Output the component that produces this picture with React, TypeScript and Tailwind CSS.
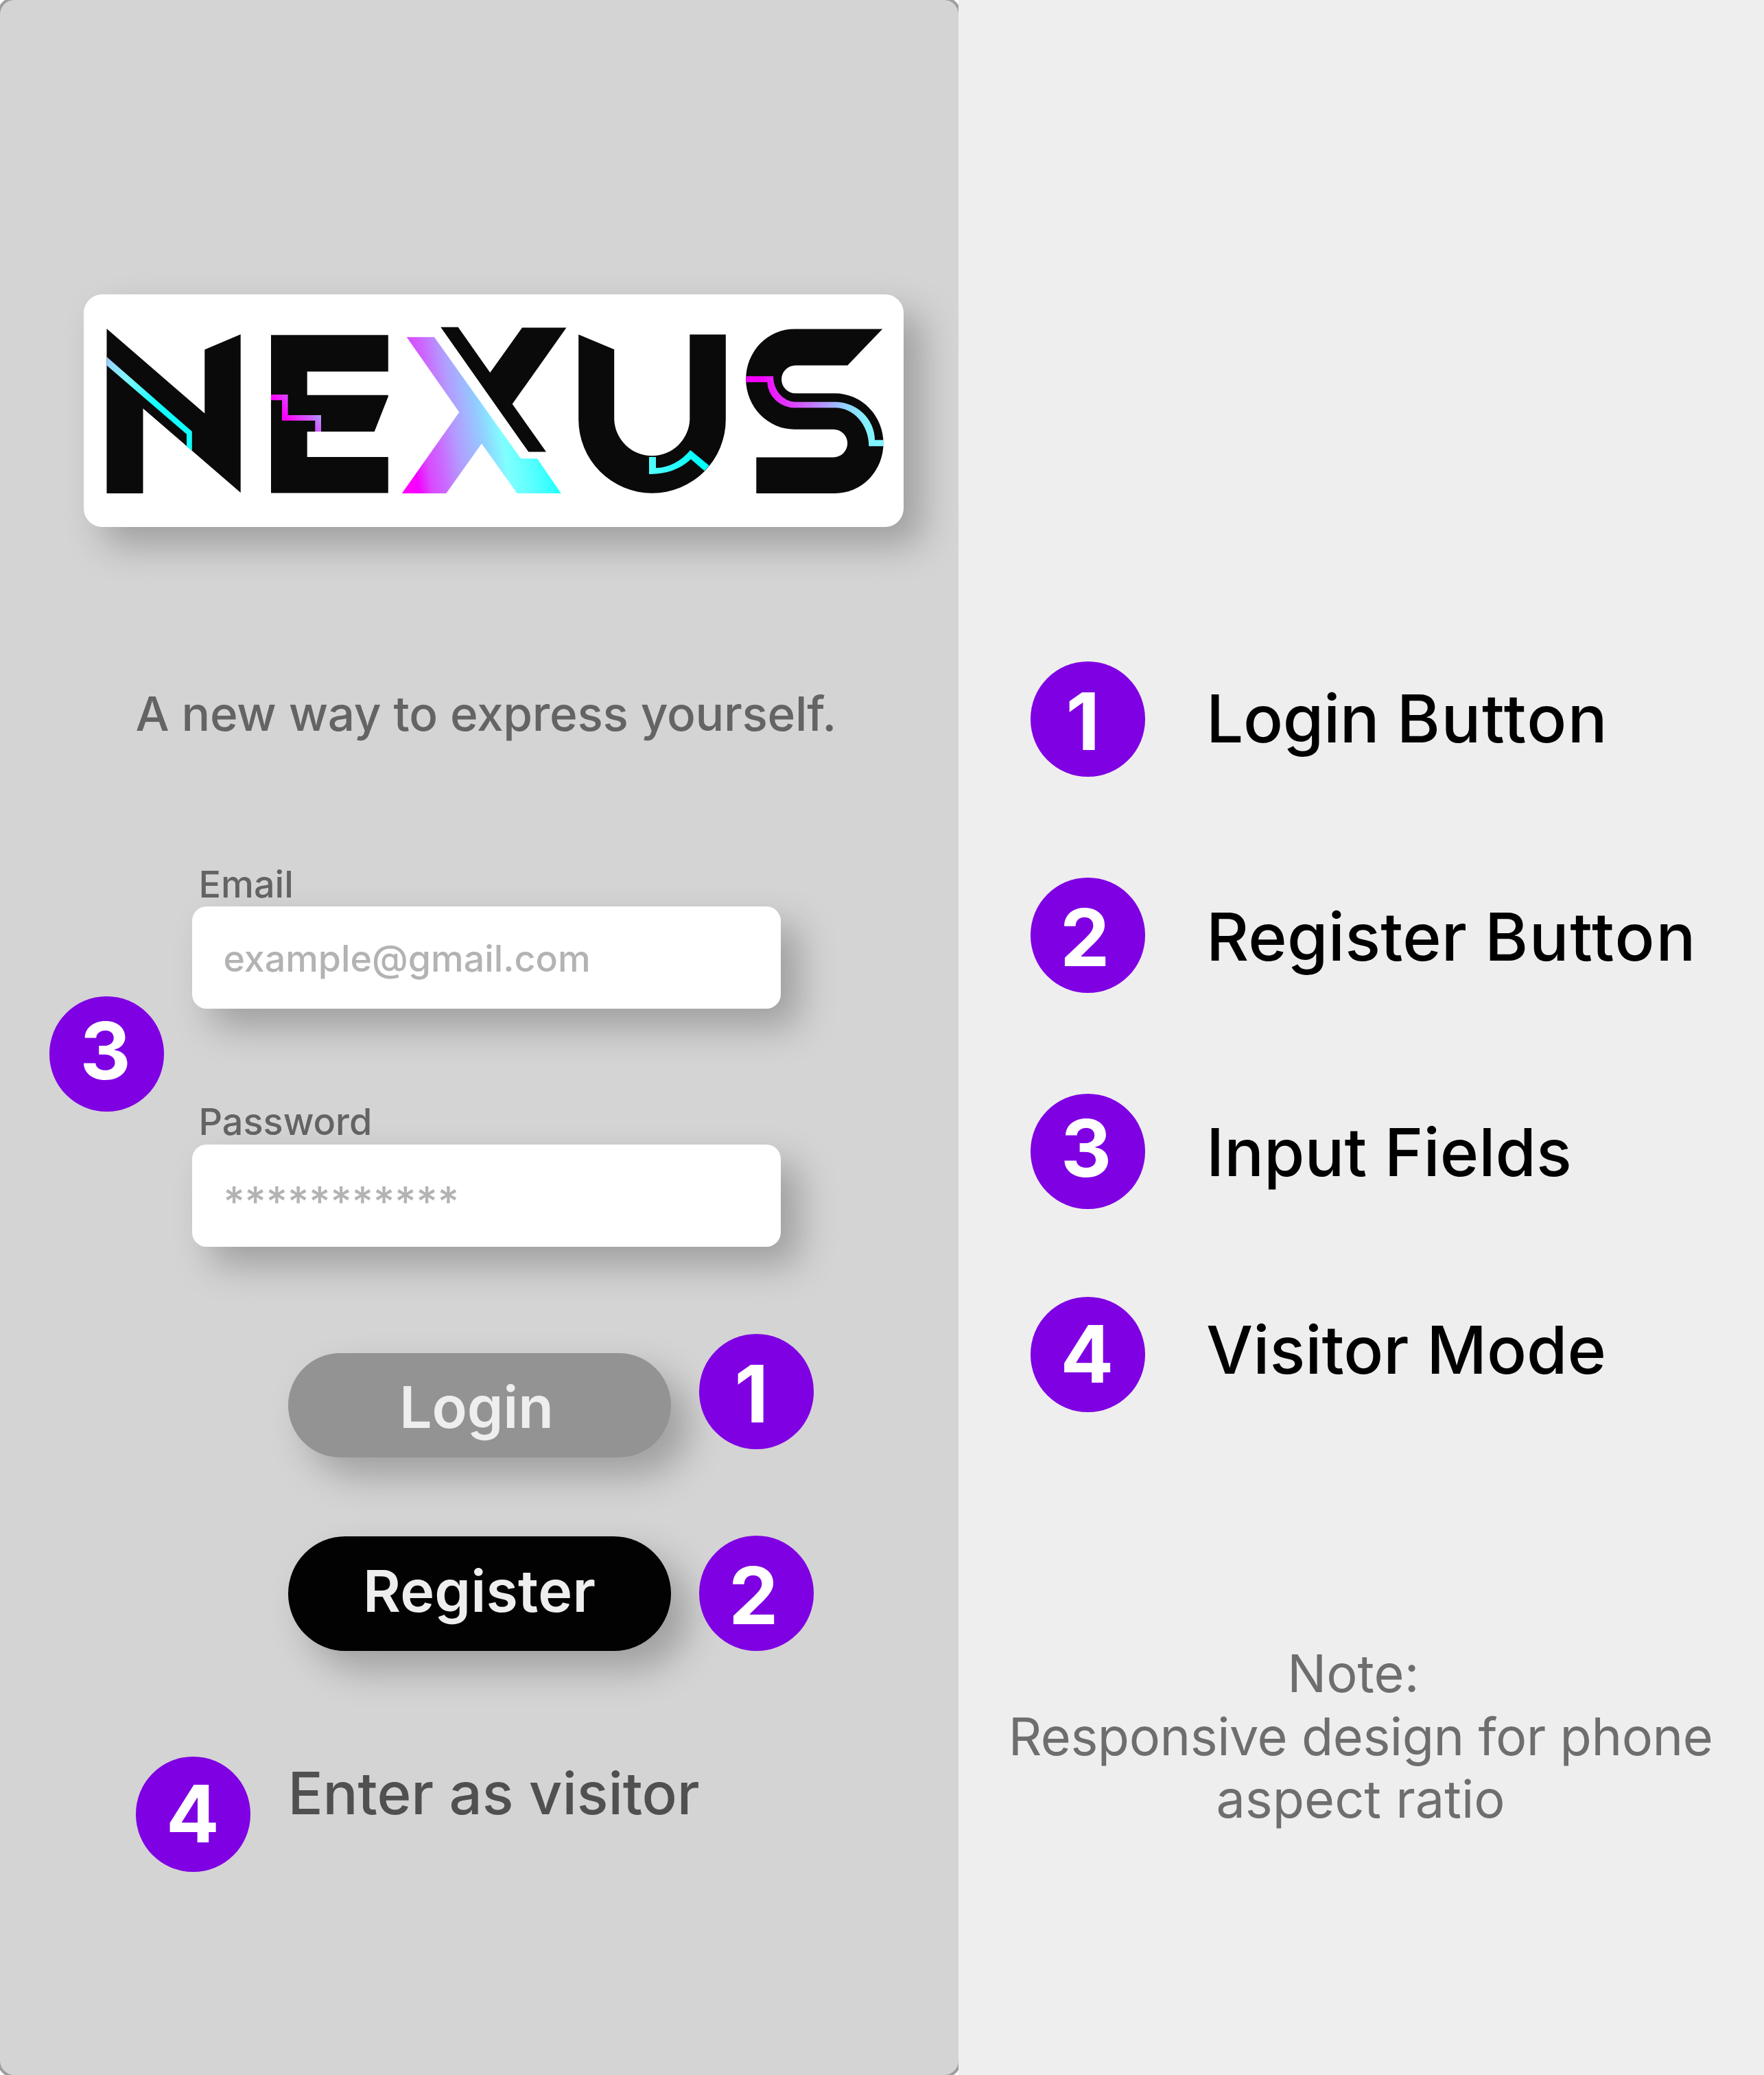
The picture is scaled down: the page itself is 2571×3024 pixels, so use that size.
import type { ReactNode } from 'react';

type Digit = 1 | 2 | 3 | 4;

const digitPlacement: Record<Digit, string> = {
  1: 'pl-[52px] pt-[30px]',
  2: 'pl-[43.5px] pt-[30px]',
  3: 'pl-[44.5px] pt-[22px]',
  4: 'pl-[44px] pt-[26px]',
};

function Badge({ n, className = '' }: { n: Digit; className?: string }) {
  return (
    <div
      className={`h-[168px] w-[167px] shrink-0 rounded-full bg-[#7f00e3] text-[115px] leading-[115px] font-bold text-white ${digitPlacement[n]} ${className}`}
    >
      {n}
    </div>
  );
}

function Logo() {
  return (
    <svg viewBox="122 429 1195 339" className="h-[339px] w-[1195px]" role="img" aria-label="Nexus">
      <defs>
        <linearGradient id="nStripe" gradientUnits="userSpaceOnUse" x1="155" y1="522" x2="235" y2="590">
          <stop offset="0" stopColor="#99ccff" />
          <stop offset="0.4" stopColor="#80f8ff" />
          <stop offset="0.9" stopColor="#1affff" />
          <stop offset="1" stopColor="#11ffff" />
        </linearGradient>
        <linearGradient id="eStripe" gradientUnits="userSpaceOnUse" x1="419" y1="613" x2="455.9" y2="587.2">
          <stop offset="0" stopColor="#ff00ff" />
          <stop offset="0.45" stopColor="#dd44ff" />
          <stop offset="0.7" stopColor="#cc66ff" />
          <stop offset="1" stopColor="#aa9fff" />
        </linearGradient>
        <linearGradient id="xBody" gradientUnits="userSpaceOnUse" x1="600" y1="719" x2="811.6" y2="685.1">
          <stop offset="0" stopColor="#ff00ff" />
          <stop offset="0.05" stopColor="#f400ff" />
          <stop offset="0.14" stopColor="#d94aff" />
          <stop offset="0.23" stopColor="#cc66ff" />
          <stop offset="0.35" stopColor="#b499ff" />
          <stop offset="0.53" stopColor="#93ccff" />
          <stop offset="0.67" stopColor="#80ffff" />
          <stop offset="0.82" stopColor="#5affff" />
          <stop offset="1" stopColor="#22ffff" />
        </linearGradient>
        <linearGradient id="uStripe" gradientUnits="userSpaceOnUse" x1="946" y1="0" x2="1020" y2="0">
          <stop offset="0" stopColor="#55ffff" />
          <stop offset="1" stopColor="#00ffff" />
        </linearGradient>
        <linearGradient id="sStripe" gradientUnits="userSpaceOnUse" x1="1110" y1="590" x2="1262" y2="575">
          <stop offset="0" stopColor="#f400ff" />
          <stop offset="0.3" stopColor="#dd44ff" />
          <stop offset="0.6" stopColor="#b099ff" />
          <stop offset="0.8" stopColor="#92d4ff" />
          <stop offset="1" stopColor="#82f4ff" />
        </linearGradient>
      </defs>
      <g fill="#0a0a0a">
        <path d="M155.5 479L298.3 602.5V509.5L350.7 487.3V718L208.5 595.3V719H155.5Z" />
        <path d="M395 488.3H565.8V541.5H447.7V575.7H565.8V578L545.7 629H447.7V666H565.8V718.6H395Z" />
        <path d="M642.3 476.8H667.7L714.3 543L761 477.6H825.5L746.7 588.7L796 658.6H770.3Z" />
        <path d="M843.2 487.5L895.2 509.3V611.5A55.1 55.1 0 0 0 1005.3 611.5V487.5H1057.8V611.4A107.3 107.3 0 0 1 843.2 611.4Z" />
        <path d="M1158 479.4H1286.2L1235.3 532.4H1159.5A20.4 20.4 0 0 0 1159.5 573.3H1217A70.5 72.8 0 0 1 1217 719H1102.3V666.4H1214.8A20.3 20.3 0 0 0 1214.8 625.7H1158A70.8 73.1 0 0 1 1158 479.4Z" />
      </g>
      <path fill="url(#nStripe)" d="M155.5 520L279.8 628.7V657L272 650V632.7L155.5 532.5Z" />
      <path fill="url(#eStripe)" d="M395 575H419.6V605H468V629H459.3V613H411V583.3H395Z" />
      <path fill="url(#xBody)" d="M592.7 491.3H633L759 668.3H783L817.8 719H753.7L702 646.4L650.3 719H585.8L669.3 600.7Z" />
      <path fill="url(#uStripe)" d="M946 666H956V682Q985 681 1006.2 656L1033.5 678.5L1026.8 686.2L1007 669.3Q983 691.5 946 691Z" />
      <path
        fill="url(#sStripe)"
        d="M1087.3 548.3H1127A32.5 37.3 0 0 0 1159 585.7H1217A58 56 0 0 1 1275 641.3H1287.8V650.3H1266.3A49 56 0 0 0 1218 594.3H1158A41 38 0 0 1 1118.3 557H1087.3Z"
      />
    </svg>
  );
}

function Field({ label, className, children }: { label: string; className: string; children: string }) {
  return (
    <label className="flex flex-col">
      <span className="pl-[9px] text-[54px] leading-[61px] font-medium text-[#646464]">{label}</span>
      <span
        className={`block h-[149px] w-[858px] rounded-[21px] bg-white pl-[45px] font-medium text-[#b3b3b3] shadow-[27px_27px_53px_rgba(0,0,0,0.25)] ${className}`}
      >
        {children}
      </span>
    </label>
  );
}

function PhoneMockup() {
  return (
    <section className="h-full w-[1397px] shrink-0 overflow-hidden bg-white">
      <div className="flex h-full w-full flex-col rounded-[21px] bg-[#d4d4d4] pt-[429px] shadow-[0_0_0_4px_#9e9e9e]">
        <div className="ml-[122px] h-[339px] w-[1195px] rounded-[27px] bg-white shadow-[27px_27px_53px_rgba(0,0,0,0.25)]">
          <Logo />
        </div>

        <p className="mt-[232px] ml-[197.5px] text-[69.33px] leading-[80px] font-medium tracking-[-0.29px] whitespace-nowrap text-[#646464]">
          A new way to express yourself.
        </p>

        <div className="mt-[178px] ml-[72px] flex items-start gap-[41.4px]">
          <Badge n={3} className="mt-[194px]" />
          <form className="flex flex-col gap-[134px]">
            <Field label="Email" className="mt-[2px] pt-[45px] text-[53.7px] leading-[61px]">
              example@gmail.com
            </Field>
            <Field label="Password" className="mt-[3px] pt-[47px] text-[60px] leading-[72px]">
              ***********
            </Field>
          </form>
        </div>

        <div className="mt-[127px] ml-[420px] flex items-start gap-[40.5px]">
          <button
            type="button"
            className="mt-[28px] h-[152px] w-[558px] rounded-full bg-[#939393] pt-[27px] pb-[23px] pl-[162px] text-left text-[84.4px] leading-[102px] font-semibold tracking-[-0.2px] text-[#eeeeee] shadow-[27px_27px_53px_rgba(0,0,0,0.25)]"
          >
            Login
          </button>
          <Badge n={1} />
        </div>

        <div className="mt-[114px] ml-[420px] flex items-start gap-[40.5px]">
          <button
            type="button"
            className="mt-px h-[167px] w-[558px] rounded-full bg-[#020202] pt-[28px] pb-[37px] pl-[109px] text-left text-[84.4px] leading-[102px] font-semibold tracking-[0.2px] text-[#eeeeee] shadow-[27px_27px_53px_rgba(0,0,0,0.25)]"
          >
            Register
          </button>
          <Badge n={2} />
        </div>

        <div className="mt-[154px] ml-[198px] flex items-start gap-[54.5px]">
          <Badge n={4} />
          <a className="mt-[3px] text-[85px] leading-[102px] font-medium tracking-[-0.15px] whitespace-nowrap text-[#505050]">
            Enter as visitor
          </a>
        </div>
      </div>
    </section>
  );
}

function LegendItem({ n, className = '', children }: { n: Digit; className?: string; children: ReactNode }) {
  return (
    <li className="flex h-[168px] items-start gap-[89.5px]">
      <Badge n={n} />
      <span className={`text-[96.2px] leading-[116px] font-medium whitespace-nowrap text-black ${className}`}>{children}</span>
    </li>
  );
}

function Legend() {
  return (
    <aside className="flex h-full flex-1 flex-col bg-[#eeeeee] pt-[964px]">
      <ol className="flex flex-col pl-[104.5px]">
        <LegendItem n={1} className="mt-[25px]">
          <span className="tracking-[-0.4px]">Login</span> <span className="tracking-[1.6px]">Button</span>
        </LegendItem>
        <li className="h-[147px]" aria-hidden />
        <LegendItem n={2} className="mt-[28px]">
          <span className="tracking-[0.2px]">Register</span> <span className="tracking-[1.7px]">Button</span>
        </LegendItem>
        <li className="h-[147px]" aria-hidden />
        <LegendItem n={3} className="mt-[27px]">
          Input Fields
        </LegendItem>
        <li className="h-[128px]" aria-hidden />
        <LegendItem n={4} className="mt-[19px]">
          Visitor Mode
        </LegendItem>
      </ol>
      <p className="mt-[335px] pr-[2px] text-center text-[75.6px] leading-[91.5px] whitespace-pre text-[#6e6e6e]">
        {'Note: \n'}
        <span className="tracking-[-0.46px]">Responsive design for phone</span>
        {'\naspect ratio'}
      </p>
    </aside>
  );
}

export default function App() {
  return (
    <main className="flex h-[3024px] w-[2571px] overflow-hidden font-['Inter',sans-serif]">
      <PhoneMockup />
      <Legend />
    </main>
  );
}
